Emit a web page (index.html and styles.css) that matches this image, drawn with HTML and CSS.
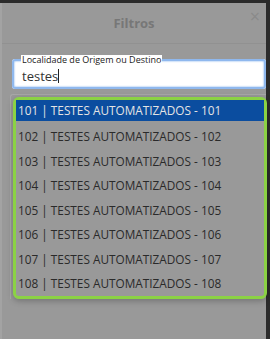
FILE: index.html
```html
<!DOCTYPE html>
<html lang="pt-BR">
<head>
    <meta charset="UTF-8">
    <meta name="viewport" content="width=device-width, initial-scale=1.0">
    <title>Filtros</title>
    <link rel="stylesheet" href="styles.css">
</head>
<body>
    <div class="modal">
        <div class="modal-header">
            <h1>Filtros</h1>
            <span class="close">&times;</span>
        </div>
        <div class="modal-body">
            <fieldset class="field">
                <legend>Localidade de Origem ou Destino</legend>
                <div class="value">testes<span class="caret"></span></div>
            </fieldset>
            <div class="dropdown">
                <ul class="options">
                    <li class="active">101 | TESTES AUTOMATIZADOS - 101</li>
                    <li>102 | TESTES AUTOMATIZADOS - 102</li>
                    <li>103 | TESTES AUTOMATIZADOS - 103</li>
                    <li>104 | TESTES AUTOMATIZADOS - 104</li>
                    <li>105 | TESTES AUTOMATIZADOS - 105</li>
                    <li>106 | TESTES AUTOMATIZADOS - 106</li>
                    <li>107 | TESTES AUTOMATIZADOS - 107</li>
                    <li>108 | TESTES AUTOMATIZADOS - 108</li>
                </ul>
            </div>
        </div>
    </div>
</body>
</html>
```

FILE: styles.css
```css
body {
    margin: 0;
    background: #2b2b2b;
    font-family: "Open Sans", Arial, sans-serif;
}

.modal {
    margin-top: 3px;
    margin-right: 4px;
    height: 336px;
    background: #999;
    border-left: 2px solid #a3a3a3;
}

.modal-header {
    position: relative;
    height: 40px;
    border-bottom: 1px solid #919191;
    text-align: center;
}

.modal-header h1 {
    margin: 0;
    padding-top: 11px;
    font-size: 13px;
    font-weight: bold;
    color: #777;
}

.close {
    position: absolute;
    top: 1px;
    right: 6px;
    font-size: 18px;
    color: #8a8a8a;
}

.modal-body {
    padding: 11px 0 0 8px;
}

.field {
    margin: 0 0 0 2px;
    padding: 3px 0 2px 8px;
    height: 25px;
    background: #fff;
    border: 2px solid #8fb8ee;
    border-radius: 3px;
    box-shadow: inset 0 0 2px #5f9de6;
}

.field legend {
    padding: 0 1px;
    margin-left: -1px;
    font-size: 9px;
    color: #222;
    background: #fff;
    line-height: 9px;
}

.value {
    font-size: 13px;
    color: #333;
    line-height: 18px;
}

.caret {
    display: inline-block;
    width: 1px;
    height: 14px;
    background: #222;
    vertical-align: -2px;
}

.dropdown {
    margin-top: 5px;
    padding: 2px 0 0 2px;
    border-top: 1px solid #a8a8a8;
    border-left: 1px solid #a8a8a8;
    border-radius: 3px 0 0 0;
}

.options {
    list-style: none;
    margin: 0;
    padding: 0;
    width: 248px;
    border: 3px solid #8bd244;
    border-radius: 6px;
    box-shadow: 0 2px 6px rgba(0, 0, 0, 0.25);
}

.options li {
    height: 24.5px;
    line-height: 24px;
    padding-left: 2px;
    font-size: 11.8px;
    color: #2a2a2a;
}

.options li.active {
    background: #0b4d9f;
    color: #e4e4e4;
    height: 21px;
    line-height: 21px;
    margin-bottom: 3px;
}
```
